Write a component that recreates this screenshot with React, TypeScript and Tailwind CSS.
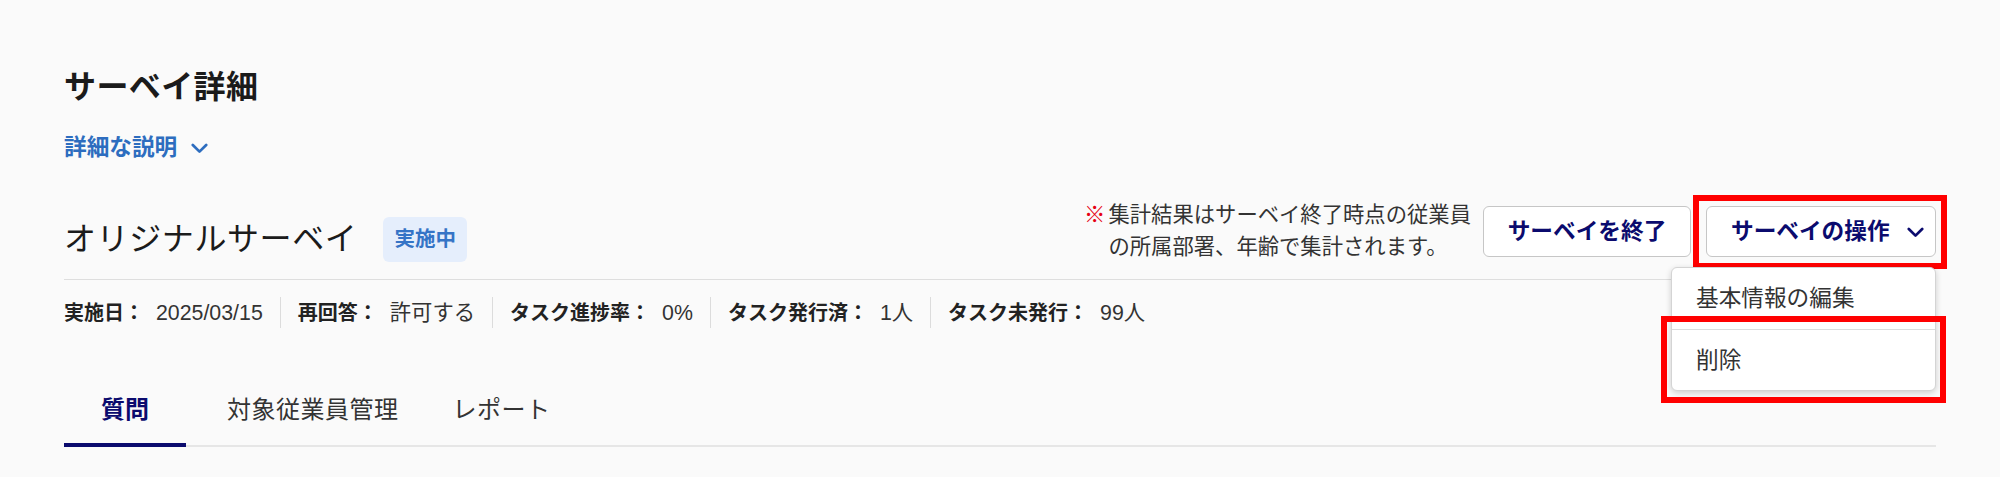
import React from "react";

const FONT = { fontFamily: '"Liberation Sans", "Noto Sans CJK JP", sans-serif' };

function Chevron({ className }: { className?: string }) {
  return (
    <svg className={className} width="17" height="11" viewBox="0 0 17 11" fill="none">
      <polyline points="1.8,2 8.5,8.6 15.2,2" stroke="currentColor" strokeWidth="2.7" strokeLinecap="round" strokeLinejoin="round" />
    </svg>
  );
}

const meta = [
  { label: "実施日：", value: "2025/03/15" },
  { label: "再回答：", value: "許可する" },
  { label: "タスク進捗率：", value: "0%" },
  { label: "タスク発行済：", value: "1人" },
  { label: "タスク未発行：", value: "99人" },
];

export default function App() {
  return (
    <div className="min-h-screen w-full bg-[#fafafa] px-16 pt-[63px] text-[#222]" style={FONT}>
      <h1 className="text-[32px] font-bold leading-[48px] tracking-[0.4px] text-[#1b1b1b]">サーベイ詳細</h1>
      <button className="mt-[20px] flex items-center gap-[14px] text-[22.67px] font-bold leading-[32px] text-[#2d6dbf]">
        <span>詳細な説明</span>
        <Chevron className="mt-[2px]" />
      </button>

      <div className="mt-[36px] flex items-end justify-between border-b border-[#dedede] pb-[16px]">
        <div className="flex items-center gap-[26px]">
          <h2 className="text-[32px] font-normal leading-[48px] tracking-[0.6px] text-[#1b1b1b]">オリジナルサーベイ</h2>
          <span className="flex h-[45px] items-center rounded-[6px] bg-[#e5eefc] px-[11px] text-[20.5px] font-bold text-[#3574c6]">
            実施中
          </span>
        </div>
        <div className="flex items-center">
          <div className="flex text-[21.33px] leading-[32px] text-[#333]">
            <span className="text-[#e60012]">※</span>
            <span className="ml-[3px]">
              集計結果はサーベイ終了時点の従業員
              <br />
              の所属部署、年齢で集計されます。
            </span>
          </div>
          <button className="ml-[12px] flex h-[51px] w-[208px] items-center justify-center rounded-[6px] border border-[#c6c6c6] bg-white text-[22.67px] font-bold text-[#0b0b6e]">
            サーベイを終了
          </button>
          <div className="relative ml-[15px]">
            <button className="flex h-[51px] w-[230px] items-center rounded-[6px] border border-[#c6c6c6] bg-white pl-[24px] text-[22.67px] font-bold text-[#0b0b6e]">
              <span>サーベイの操作</span>
              <Chevron className="ml-[17px] mt-[2px]" />
            </button>
            <div className="pointer-events-none absolute -left-[13px] -right-[11px] -top-[11px] -bottom-[12px] border-[6px] border-[#ff0000]" />
            <div className="absolute right-0 top-[61px] z-10 w-[265px] rounded-[6px] border border-[#d4d4d4] bg-white text-[22.67px] text-[#333] shadow-[0_2px_6px_rgba(0,0,0,0.18)]">
              <div className="flex h-[61px] items-center px-[24px]">基本情報の編集</div>
              <div className="flex h-[61px] items-center border-t border-[#dcdcdc] px-[24px]">削除</div>
              <div className="pointer-events-none absolute -left-[11px] -right-[11px] top-[48px] -bottom-[13px] border-[6px] border-[#ff0000]" />
            </div>
          </div>
        </div>
      </div>

      <div className="mt-[17px] flex h-[31px] items-stretch leading-[30px]">
        {meta.map((m, i) => (
          <div
            key={m.label}
            className={
              i === 0
                ? "flex items-center pr-[17px]"
                : i === meta.length - 1
                ? "flex items-center border-l border-[#dcdcdc] pl-[17px]"
                : "flex items-center border-l border-[#dcdcdc] px-[17px]"
            }
          >
            <span className="text-[20px] font-bold text-[#222]">{m.label}</span>
            <span className="ml-[12px] text-[21.33px] text-[#333]">{m.value}</span>
          </div>
        ))}
      </div>

      <div className="mt-[64px] flex gap-[28px] border-b-2 border-[#e6e6e6]">
        <button className="-mb-[2px] flex min-w-[122px] flex-col items-center">
          <span className="px-[13px] text-[24px] font-bold leading-[36px] text-[#0b0b6e]">質問</span>
          <span className="mt-[15px] h-[4px] w-full bg-[#0b0b6e]" />
        </button>
        <button className="-mb-[2px] flex flex-col items-center">
          <span className="px-[13px] text-[24px] leading-[36px] tracking-[0.5px] text-[#333]">対象従業員管理</span>
          <span className="mt-[15px] h-[4px] w-full bg-transparent" />
        </button>
        <button className="-mb-[2px] flex flex-col items-center">
          <span className="px-[13px] text-[24px] leading-[36px] tracking-[0.5px] text-[#333]">レポート</span>
          <span className="mt-[15px] h-[4px] w-full bg-transparent" />
        </button>
      </div>
    </div>
  );
}
